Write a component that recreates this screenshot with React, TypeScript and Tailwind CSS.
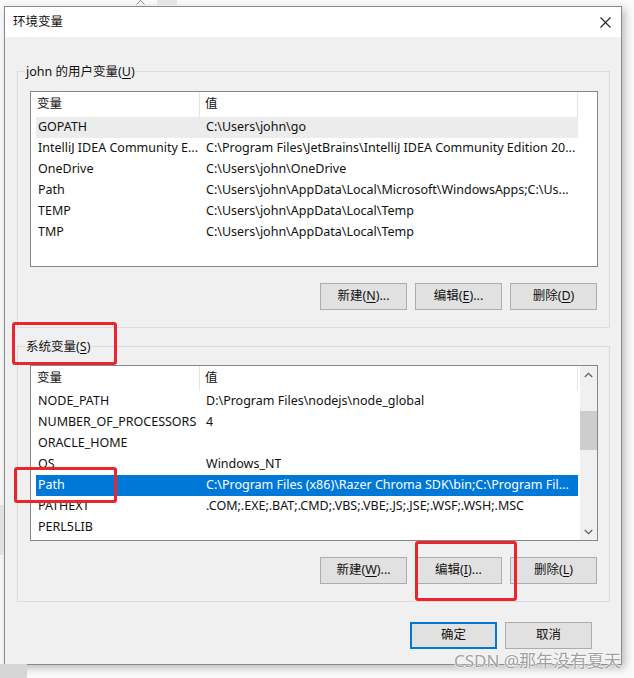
import React from "react";

const FONT = { fontFamily: '"Noto Sans", "Noto Sans CJK SC", sans-serif' };

type Row = { name: string; value: string; sel?: "gray" | "blue" };

const userRows: Row[] = [
  { name: "GOPATH", value: "C:\\Users\\john\\go", sel: "gray" },
  { name: "IntelliJ IDEA Community E...", value: "C:\\Program Files\\JetBrains\\IntelliJ IDEA Community Edition 20..." },
  { name: "OneDrive", value: "C:\\Users\\john\\OneDrive" },
  { name: "Path", value: "C:\\Users\\john\\AppData\\Local\\Microsoft\\WindowsApps;C:\\Us..." },
  { name: "TEMP", value: "C:\\Users\\john\\AppData\\Local\\Temp" },
  { name: "TMP", value: "C:\\Users\\john\\AppData\\Local\\Temp" },
];

const sysRows: Row[] = [
  { name: "NODE_PATH", value: "D:\\Program Files\\nodejs\\node_global" },
  { name: "NUMBER_OF_PROCESSORS", value: "4" },
  { name: "ORACLE_HOME", value: "" },
  { name: "OS", value: "Windows_NT" },
  { name: "Path", value: "C:\\Program Files (x86)\\Razer Chroma SDK\\bin;C:\\Program Fil...", sel: "blue" },
  { name: "PATHEXT", value: ".COM;.EXE;.BAT;.CMD;.VBS;.VBE;.JS;.JSE;.WSF;.WSH;.MSC" },
  { name: "PERL5LIB", value: "" },
];

function Btn({ pre, key1, post, primary }: { pre: string; key1?: string; post?: string; primary?: boolean }) {
  return (
    <div
      className={
        "w-[87px] h-[27px] flex items-center justify-center bg-[#e1e1e1] text-[12.5px] text-[#111] " +
        (primary ? "border-2 border-[#0078d7]" : "border border-[#adadad]")
      }
    >
      <span className="whitespace-pre">
        {pre}
        {key1 !== undefined && (
          <>
            (<span className="underline underline-offset-2">{key1}</span>){post}
          </>
        )}
      </span>
    </div>
  );
}

function ListBox({ rows, scroll }: { rows: Row[]; scroll?: boolean }) {
  return (
    <div className="h-[176px] border border-[#828790] bg-white flex text-[12.5px] text-[#111]">
      <div className="w-[547px] flex flex-col">
        <div className="h-[25px] flex items-center border-r border-[#e5e5e5]">
          <div className="w-[169px] h-full pl-[6px] flex items-center border-r border-[#e5e5e5]">变量</div>
          <div className="pl-[5px]">值</div>
        </div>
        {rows.map((r, i) => (
          <div
            key={i}
            className={
              "ml-[5px] h-[21px] flex items-center whitespace-nowrap overflow-hidden " +
              (r.sel === "blue" ? "bg-[#0078d7] text-white" : r.sel === "gray" ? "bg-[#ececec]" : "")
            }
          >
            <div className="w-[164px] shrink-0 pl-[2px] overflow-hidden">{r.name}</div>
            <div className="pl-[6px] overflow-hidden">{r.value}</div>
          </div>
        ))}
      </div>
      {scroll ? (
        <div className="ml-auto w-[17px] bg-[#f0f0f0] flex flex-col items-center">
          <div className="h-[17px] flex items-center justify-center">
            <svg width="9" height="6" viewBox="0 0 9 6">
              <path d="M0.8 5 L4.5 1.3 L8.2 5" fill="none" stroke="#606060" strokeWidth="1.3" />
            </svg>
          </div>
          <div className="mt-[28px] w-[17px] h-[39px] bg-[#cdcdcd]" />
          <div className="mt-auto h-[17px] flex items-center justify-center">
            <svg width="9" height="6" viewBox="0 0 9 6">
              <path d="M0.8 1 L4.5 4.7 L8.2 1" fill="none" stroke="#606060" strokeWidth="1.3" />
            </svg>
          </div>
        </div>
      ) : null}
    </div>
  );
}

function Group({
  label,
  k,
  rows,
  scroll,
  buttons,
  first,
}: {
  label: string;
  k: string;
  rows: Row[];
  scroll?: boolean;
  buttons: [string, string, string?][];
  first?: boolean;
}) {
  return (
    <fieldset className="border border-[#dcdcdc] px-0 pb-[17px]">
      <legend className="ml-[7px] px-[1px] text-[12.5px] leading-[17px] text-[#111]">
        {label}(<span className="underline underline-offset-2">{k}</span>)
      </legend>
      <div className={"pl-[12px] pr-[11px] " + (first ? "pt-[11px]" : "pt-[10px]")}>
        <ListBox rows={rows} scroll={scroll} />
        <div className="mt-[16px] flex justify-end gap-[8px] pr-[1px]">
          {buttons.map((b, i) => (
            <Btn key={i} pre={b[0]} key1={b[1]} post={b[2] ?? ""} />
          ))}
        </div>
      </div>
    </fieldset>
  );
}

export default function App() {
  return (
    <div className="w-[634px] h-[678px] bg-[#fafafa] relative overflow-hidden" style={FONT}>
      {/* background window hints */}
      <svg className="absolute left-[136px] top-0" width="9" height="5" viewBox="0 0 9 5">
        <path d="M0.5 -3.5 L8.5 4.5 M8.5 -3.5 L0.5 4.5" stroke="#8a8a8a" strokeWidth="1" />
      </svg>
      <div className="absolute left-[157px] top-0 w-[20px] h-[5px] bg-[#e4e4e4]" />
      <div className="absolute left-0 top-[664px] w-[27px] h-[14px] bg-[#d6d6d6]" />
      <div className="absolute left-0 top-[505px] w-[4px] h-[50px] bg-[#e2e2e2]" />

      <div className="pl-[4px] pt-[6px]">
        <div className="w-[618px] h-[659px] border border-[#8a8a8a] bg-[#f0f0f0] flex flex-col shadow-[3px_3px_8px_rgba(0,0,0,0.25)]">
          <div className="h-[30px] bg-white flex items-center justify-between pl-[8px] pr-[10px] text-[12.5px] text-[#111]">
            <span>环境变量</span>
            <svg width="11" height="11" viewBox="0 0 11 11">
              <path d="M0.5 0.5 L10.5 10.5 M10.5 0.5 L0.5 10.5" stroke="#222" strokeWidth="1.1" />
            </svg>
          </div>
          <div className="flex-1 flex flex-col pl-[12px] pr-[11px] pt-[26px]">
            <Group
              label="john 的用户变量"
              k="U"
              rows={userRows}
              first
              buttons={[
                ["新建", "N", "..."],
                ["编辑", "E", "..."],
                ["删除", "D", ""],
              ]}
            />
            <div className="h-[10px]" />
            <Group
              label="系统变量"
              k="S"
              rows={sysRows}
              scroll
              buttons={[
                ["新建", "W", "..."],
                ["编辑", "I", "..."],
                ["删除", "L", ""],
              ]}
            />
            <div className="mt-[20px] flex justify-end gap-[8px] pr-[18px]">
              <Btn pre="确定" primary />
              <Btn pre="取消" />
            </div>
          </div>
        </div>
      </div>

      {/* red annotation boxes */}
      <div className="absolute left-[12px] top-[322px] w-[105px] h-[43px] border-[3px] border-[#e8262b] rounded-[3px]" />
      <div className="absolute left-[14px] top-[467px] w-[103px] h-[36px] border-[3px] border-[#e8262b] rounded-[3px]" />
      <div className="absolute left-[415px] top-[541px] w-[102px] h-[60px] border-[3px] border-[#e8262b] rounded-[3px]" />

      {/* watermark */}
      <div
        className="absolute left-[454px] top-[649px] text-[17px] leading-[23px] text-[#a0a0a0] whitespace-nowrap"
        style={{ textShadow: "0 0 2px #fff, 0 0 2px #fff, 0 0 1px #fff" }}
      >
        CSDN @那年没有夏天
      </div>
    </div>
  );
}
